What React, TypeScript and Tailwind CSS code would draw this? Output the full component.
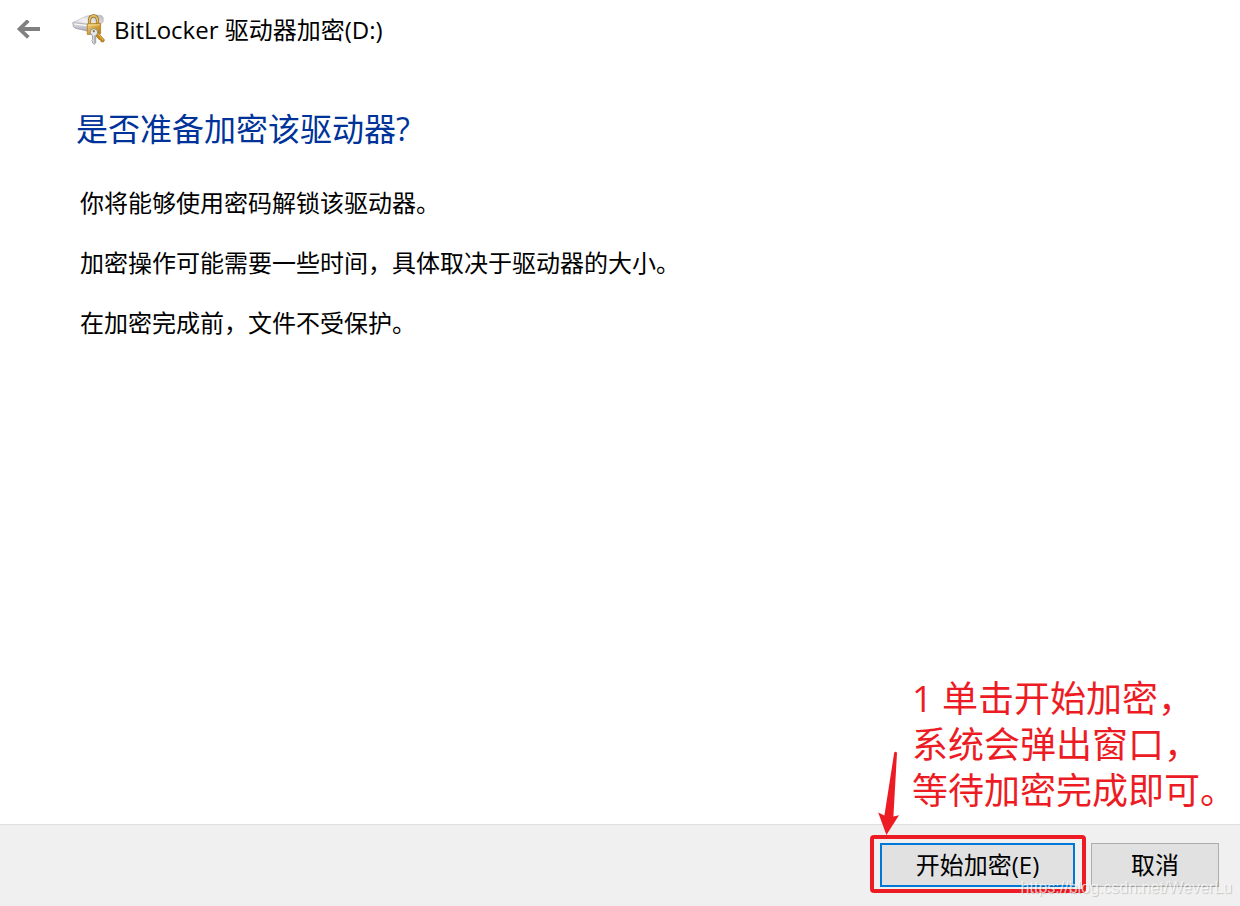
import React from "react";

function BackArrow() {
  return (
    <svg viewBox="0 0 24 20" className="h-5 w-6" fill="none" stroke="#808080" aria-hidden="true">
      <path d="M3 9H24" strokeWidth="4" />
      <path d="M12.3 0.6L3.6 9L12.3 17.4" strokeWidth="3.8" />
    </svg>
  );
}

function DriveLockIcon() {
  return (
    <svg viewBox="0 0 34 34" className="h-[34px] w-[34px]" aria-hidden="true">
      <defs>
        <linearGradient id="driveTop" x1="0" y1="1" x2="1" y2="0">
          <stop offset="0" stopColor="#bcbcc2" />
          <stop offset="0.5" stopColor="#f3f3f5" />
          <stop offset="1" stopColor="#b4b4bb" />
        </linearGradient>
        <linearGradient id="driveFront" x1="0" y1="0" x2="0" y2="1">
          <stop offset="0" stopColor="#e9e9ef" />
          <stop offset="1" stopColor="#a4a4b4" />
        </linearGradient>
        <linearGradient id="brass" x1="0" y1="0" x2="1" y2="1">
          <stop offset="0" stopColor="#f3d787" />
          <stop offset="0.5" stopColor="#d4a23a" />
          <stop offset="1" stopColor="#a97612" />
        </linearGradient>
      </defs>
      <path d="M1 9.5L14 3.2Q22 1 29.5 2.5L31.2 4.5V9L20 17L2 14Z" fill="url(#driveTop)" stroke="#b4b4ba" strokeWidth="0.6" />
      <path d="M0.8 9.6L17 11.3V18.5L3 15.2Q0.8 14.4 0.8 9.6Z" fill="url(#driveFront)" stroke="#9494a0" strokeWidth="0.6" />
      <path d="M2.5 11L15 12.6" stroke="#fff" strokeWidth="1" />
      <path d="M17.5 12V7.5Q17.8 2.8 21.5 2.8T25.5 7.5V12" fill="none" stroke="#8f6a20" strokeWidth="3.2" />
      <path d="M17.5 12V7.5Q17.8 2.8 21.5 2.8T25.5 7.5V12" fill="none" stroke="#e2bd61" strokeWidth="1.8" />
      <path d="M15.3 10.8L28.6 10.3V20.8L15.3 21.5Z" fill="url(#brass)" stroke="#ad7d21" strokeWidth="0.8" />
      <path d="M16.5 12.2L27.5 11.8" stroke="#f5dc96" strokeWidth="0.9" />
      <path d="M24.5 18L32.5 27L31.3 29L29 28.6L28.6 26.8L26.8 26.3L22.5 21Z" fill="#c38b18" stroke="#966713" strokeWidth="0.7" />
      <path d="M25.5 20L31.3 27.2" stroke="#ecc55f" strokeWidth="0.9" />
      <path d="M21.8 15.7Q25.6 15.7 25.6 19.2Q25.6 21.4 23.7 22.6V30L22.2 31.4L20.6 30V28.4L19.8 27.6L20.6 26.6V22.6Q18.2 21.4 18.2 19.2Q18.2 15.7 21.8 15.7Z" fill="#e3e5e9" stroke="#85888e" strokeWidth="0.8" />
      <circle cx="21.8" cy="18.2" r="1.1" fill="#8c762f" />
      <path d="M22.4 22.5V30" stroke="#8f9299" strokeWidth="0.7" />
    </svg>
  );
}

const statements = [
  "你将能够使用密码解锁该驱动器。",
  "加密操作可能需要一些时间，具体取决于驱动器的大小。",
  "在加密完成前，文件不受保护。",
];

function Annotation() {
  return (
    <div className="pointer-events-none absolute right-1 bottom-full mb-[11px] text-4xl leading-[46px] text-[#ed1c24]">
      <p>1 单击开始加密，</p>
      <p>系统会弹出窗口，</p>
      <p>等待加密完成即可。</p>
    </div>
  );
}

function PointerArrow() {
  return (
    <svg viewBox="0 0 24 84" className="pointer-events-none absolute bottom-full -left-0.5 mb-2 h-[84px] w-6" aria-hidden="true">
      <path d="M16.2 1.6Q17.7 0 19 1.8L15.4 65.4L21 64.2L8.4 84L0.2 61.4L6.4 64.6Z" fill="#ed1c24" />
    </svg>
  );
}

export default function App() {
  return (
    <div className="flex min-h-screen flex-col bg-white font-['Open_Sans','Noto_Sans_CJK_SC',sans-serif] text-2xl text-black">
      <header className="flex h-[60px] items-center px-4">
        <button type="button" aria-label="返回" className="flex w-14 items-center">
          <BackArrow />
        </button>
        <DriveLockIcon />
        <h1 className="ml-2 leading-8">BitLocker 驱动器加密(D:)</h1>
      </header>

      <main className="grow px-20 pt-[45px]">
        <h2 className="-ml-1 text-[32px] leading-[48px] text-[#003399]">是否准备加密该驱动器?</h2>
        <div className="mt-8 flex flex-col gap-6 leading-9">
          {statements.map((text) => (
            <p key={text}>{text}</p>
          ))}
        </div>
      </main>

      <footer className="relative flex h-[82px] items-start justify-end gap-4 border-t border-[#dfdfdf] bg-[#f0f0f0] pt-[18px] pr-[21px]">
        <Annotation />
        <div className="relative">
          <button type="button" className="h-11 w-[195px] border-2 border-[#0078d7] bg-[#e1e1e1] leading-8">
            开始加密(E)
          </button>
          <div className="pointer-events-none absolute -top-2 -right-[11px] -bottom-[6px] -left-[10px] rounded-sm border-4 border-[#ed1c24]" />
          <PointerArrow />
        </div>
        <button type="button" className="h-11 w-32 border border-[#adadad] bg-[#e1e1e1] leading-8">
          取消
        </button>
        <span className="pointer-events-none absolute right-2 bottom-2 font-['Liberation_Sans',sans-serif] text-base leading-5 text-white/70 [text-shadow:1px_1px_1px_rgba(0,0,0,0.18)]">
          https://blog.csdn.net/WeverLu
        </span>
      </footer>
    </div>
  );
}
